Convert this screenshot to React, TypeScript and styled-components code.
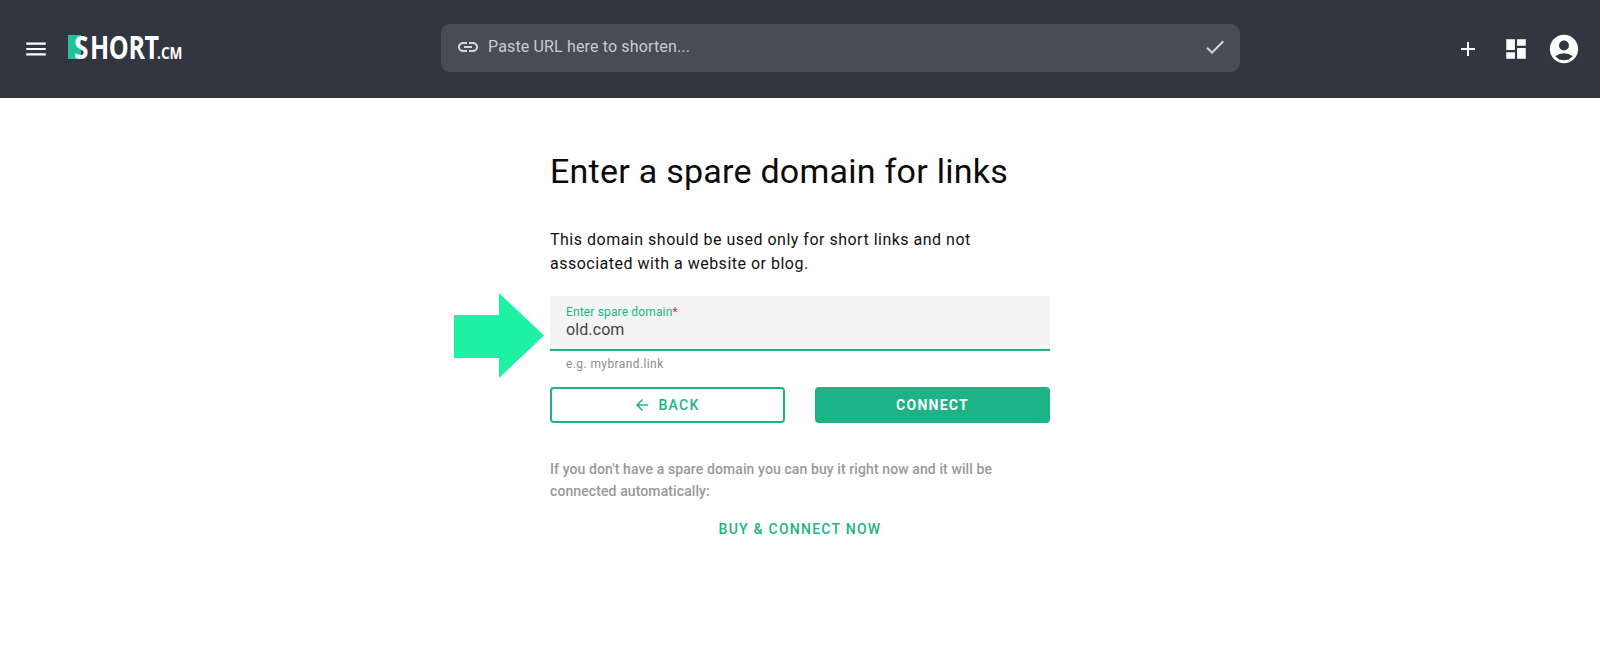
import styled, { createGlobalStyle } from "styled-components";
import { MdMenu, MdLink, MdCheck, MdAdd, MdDashboard, MdAccountCircle, MdArrowBack } from "react-icons/md";

const GlobalStyle = createGlobalStyle`
  html, body {
    margin: 0;
    padding: 0;
    background: #fff;
    font-family: Roboto, "Liberation Sans", sans-serif;
  }
  * { box-sizing: border-box; }
`;

const Header = styled.header`
  height: 98px;
  background: #323640;
  display: flex;
  align-items: center;
  position: relative;
  padding: 0 12px 0 23px;
`;

const Left = styled.div`
  display: flex;
  align-items: center;
  width: 418px;
  color: #fff;
`;

const Logo = styled.div`
  display: flex;
  align-items: baseline;
  margin: 0 0 4px 19px;
  color: #fff;
  font-family: "Open Sans", sans-serif;
  font-weight: 700;
  position: relative;
  height: 26px;
  line-height: 26px;
`;

const LogoMark = styled.span`
  display: inline-block;
  width: 13px;
  height: 24px;
  background: #22c197;
  margin-top: 1px;
  align-self: flex-start;
`;

const LogoS = styled.span`
  font-size: 33px;
  margin-left: -7px;
  display: inline-block;
  transform: scaleX(0.8);
  transform-origin: left;
  width: 16px;
`;

const LogoWord = styled.span`
  font-size: 33px;
  letter-spacing: -0.5px;
  display: inline-block;
  transform: scaleX(0.76);
  transform-origin: left;
  width: 67px;
`;

const LogoTld = styled.span`
  font-size: 16px;
  display: inline-block;
  transform: scaleX(0.85);
  transform-origin: left;
`;

const Search = styled.div`
  width: 799px;
  height: 48px;
  margin-top: -2px;
  border-radius: 9px;
  background: #484c55;
  display: flex;
  align-items: center;
  padding: 0 13px 3px 15px;
  color: #d4d5d8;
`;

const SearchText = styled.span`
  flex: 1;
  font-size: 16px;
  letter-spacing: 0.15px;
  margin-left: 8px;
  color: #c9cbce;
`;

const Actions = styled.div`
  margin-left: auto;
  display: flex;
  align-items: center;
  color: #fff;
`;

const ActionSlot = styled.span<{ $width: number }>`
  width: ${(p) => p.$width}px;
  display: flex;
  justify-content: center;
`;

const Main = styled.main`
  width: 500px;
  margin: 0 auto;
  position: relative;
  padding-top: 52px;
`;

const Title = styled.h1`
  margin: 0;
  font-size: 34px;
  line-height: 42px;
  font-weight: 400;
  color: #0a0a0a;
  letter-spacing: 0.25px;
`;

const Intro = styled.p`
  margin: 36px 0 0;
  font-size: 16px;
  line-height: 24px;
  letter-spacing: 0.5px;
  color: #111;
`;

const Field = styled.div`
  margin-top: 20px;
  height: 55px;
  background: #f4f4f4;
  border-bottom: 2px solid #1cb486;
  padding: 8px 16px 0;
`;

const FieldLabel = styled.div`
  font-size: 12px;
  line-height: 16px;
  letter-spacing: 0.15px;
  color: #1cb486;
`;

const Required = styled.span`
  color: #d32f4f;
`;

const FieldValue = styled.div`
  font-size: 16px;
  line-height: 20px;
  letter-spacing: 0.1px;
  color: #444;
`;

const Hint = styled.div`
  padding: 6px 16px 0;
  font-size: 12px;
  line-height: 14px;
  letter-spacing: 0.4px;
  color: #8c8c8c;
`;

const Arrow = styled.svg`
  position: absolute;
  left: -96px;
  top: 195px;
`;

const Buttons = styled.div`
  margin-top: 16px;
  display: flex;
  justify-content: space-between;
`;

const Button = styled.button<{ $filled?: boolean }>`
  width: 235px;
  height: 36px;
  border-radius: 4px;
  border: 2px solid #1cb486;
  background: ${(p) => (p.$filled ? "#1cb486" : "#fff")};
  color: ${(p) => (p.$filled ? "#fff" : "#1cb486")};
  font-family: inherit;
  font-size: 14px;
  font-weight: ${(p) => (p.$filled ? 700 : 500)};
  letter-spacing: 1.25px;
  display: flex;
  align-items: center;
  justify-content: center;
  gap: 7px;
  padding: ${(p) => (p.$filled ? "0" : "0 2px 0 0")};
`;

const Note = styled.p`
  margin: 35px 0 0;
  font-size: 14px;
  line-height: 22px;
  font-weight: 500;
  letter-spacing: 0.1px;
  color: #999;
`;

const BuyLink = styled.a`
  display: block;
  margin-top: 17px;
  text-align: center;
  font-size: 14px;
  line-height: 20px;
  font-weight: 500;
  letter-spacing: 1.25px;
  color: #1cb486;
`;

export default function App() {
  return (
    <>
      <GlobalStyle />
      <Header>
        <Left>
          <MdMenu size={26} />
          <Logo>
            <LogoMark />
            <LogoS>S</LogoS>
            <LogoWord>HORT</LogoWord>
            <LogoTld>.CM</LogoTld>
          </Logo>
        </Left>
        <Search>
          <MdLink size={24} />
          <SearchText>Paste URL here to shorten...</SearchText>
          <MdCheck size={24} />
        </Search>
        <Actions>
          <ActionSlot $width={48}>
            <MdAdd size={24} />
          </ActionSlot>
          <ActionSlot $width={48}>
            <MdDashboard size={26} />
          </ActionSlot>
          <ActionSlot $width={48}>
            <MdAccountCircle size={34} />
          </ActionSlot>
        </Actions>
      </Header>
      <Main>
        <Title>Enter a spare domain for links</Title>
        <Intro>
          This domain should be used only for short links and not
          <br />
          associated with a website or blog.
        </Intro>
        <Arrow width="90" height="85" viewBox="0 0 90 85">
          <path d="M0 22H45V0L90 42.5L45 85V65H0Z" fill="#1ef0a4" />
        </Arrow>
        <Field>
          <FieldLabel>
            Enter spare domain<Required>*</Required>
          </FieldLabel>
          <FieldValue>old.com</FieldValue>
        </Field>
        <Hint>e.g. mybrand.link</Hint>
        <Buttons>
          <Button>
            <MdArrowBack size={18} />
            BACK
          </Button>
          <Button $filled>CONNECT</Button>
        </Buttons>
        <Note>
          If you don't have a spare domain you can buy it right now and it will be
          <br />
          connected automatically:
        </Note>
        <BuyLink>BUY &amp; CONNECT NOW</BuyLink>
      </Main>
    </>
  );
}
